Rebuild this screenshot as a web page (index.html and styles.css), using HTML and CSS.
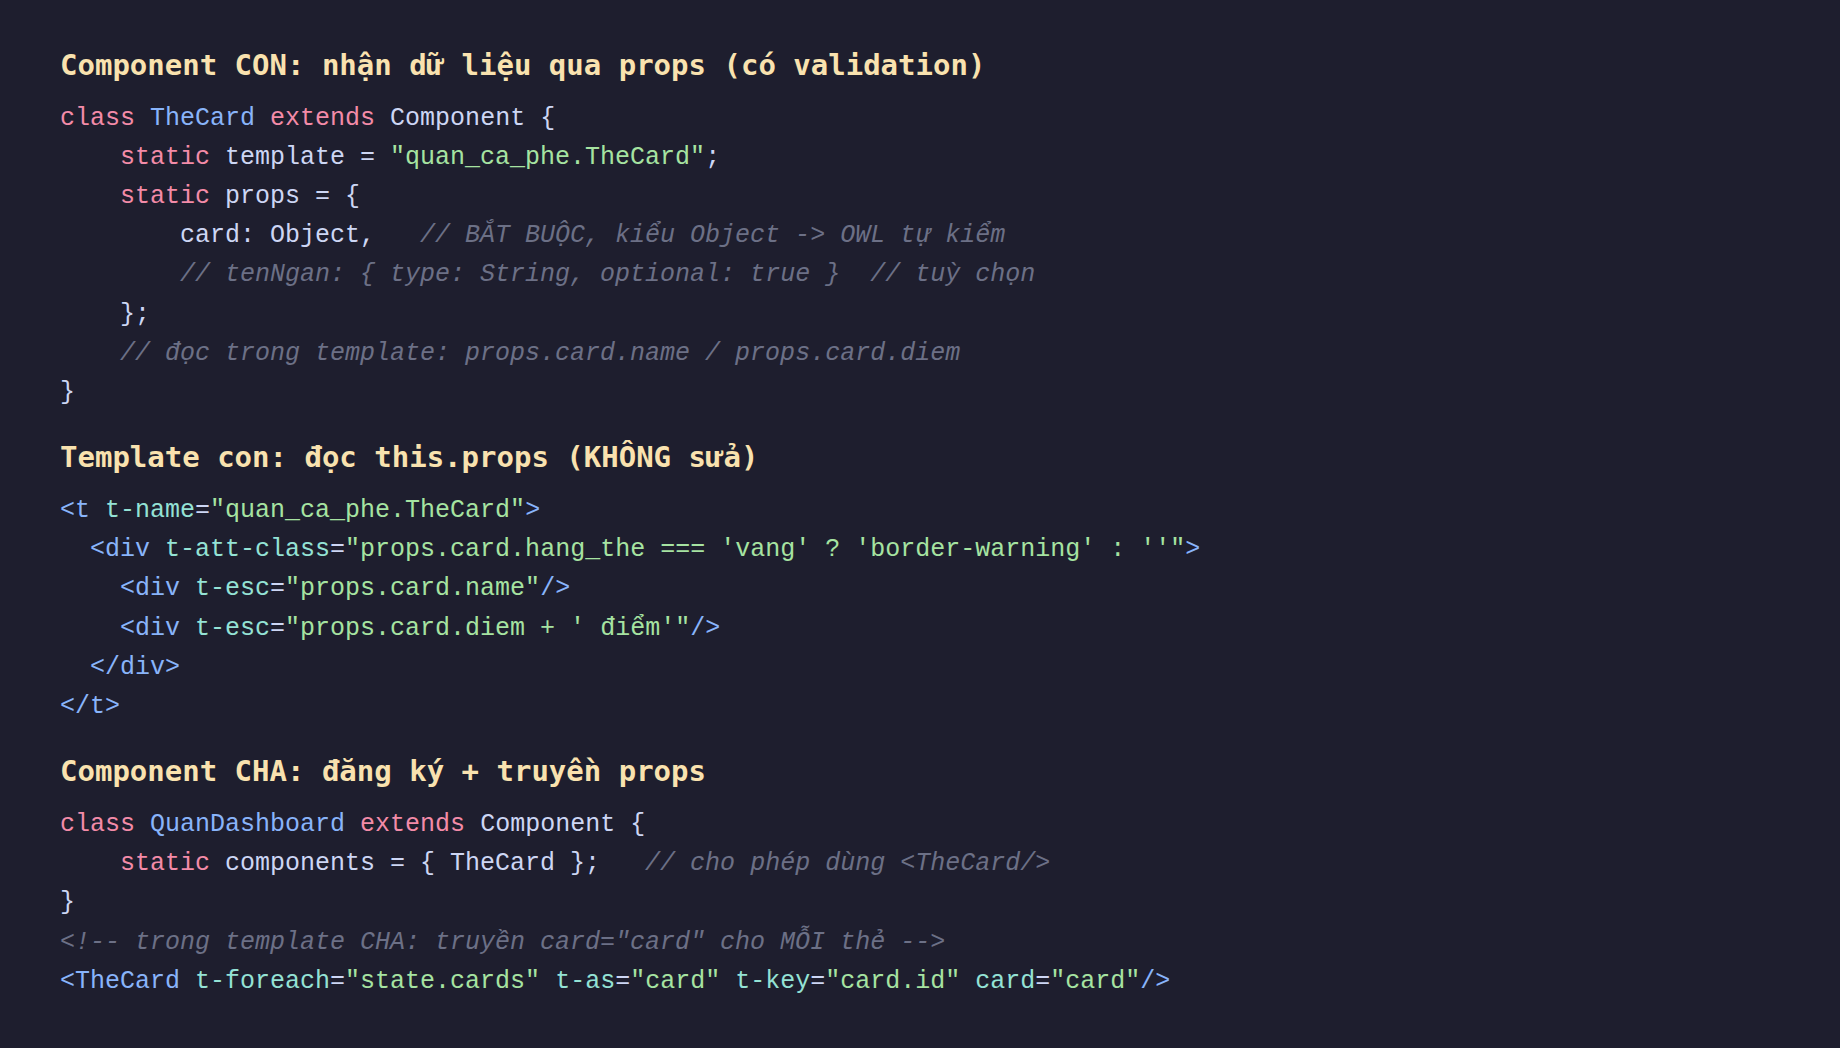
FILE: index.html
```html
<!DOCTYPE html>
<html lang="vi">
<head>
<meta charset="utf-8">
<title>OWL props</title>
<link rel="stylesheet" href="styles.css">
</head>
<body>
<main class="page">
<h2 class="heading">Component CON: nhận dữ liệu qua props (có validation)</h2>
<pre class="code"><span class="kw">class</span> <span class="cls">TheCard</span> <span class="kw">extends</span> Component {
    <span class="kw">static</span> template = <span class="str">"quan_ca_phe.TheCard"</span>;
    <span class="kw">static</span> props = {
        card: Object,   <span class="cm">// BẮT BUỘC, kiểu Object -&gt; OWL tự kiểm</span>
        <span class="cm">// tenNgan: { type: String, optional: true }  // tuỳ chọn</span>
    };
    <span class="cm">// đọc trong template: props.card.name / props.card.diem</span>
}</pre>
<h2 class="heading">Template con: đọc this.props (KHÔNG sửa)</h2>
<pre class="code"><span class="tag">&lt;t</span> <span class="attr">t-name</span>=<span class="str">"quan_ca_phe.TheCard"</span><span class="tag">&gt;</span>
  <span class="tag">&lt;div</span> <span class="attr">t-att-class</span>=<span class="str">"props.card.hang_the === 'vang' ? 'border-warning' : ''"</span><span class="tag">&gt;</span>
    <span class="tag">&lt;div</span> <span class="attr">t-esc</span>=<span class="str">"props.card.name"</span><span class="tag">/&gt;</span>
    <span class="tag">&lt;div</span> <span class="attr">t-esc</span>=<span class="str">"props.card.diem + ' điểm'"</span><span class="tag">/&gt;</span>
  <span class="tag">&lt;/div&gt;</span>
<span class="tag">&lt;/t&gt;</span></pre>
<h2 class="heading">Component CHA: đăng ký + truyền props</h2>
<pre class="code"><span class="kw">class</span> <span class="cls">QuanDashboard</span> <span class="kw">extends</span> Component {
    <span class="kw">static</span> components = { TheCard };   <span class="cm">// cho phép dùng &lt;TheCard/&gt;</span>
}
<span class="cm">&lt;!-- trong template CHA: truyền card="card" cho MỖI thẻ --&gt;</span>
<span class="tag">&lt;TheCard</span> <span class="attr">t-foreach</span>=<span class="str">"state.cards"</span> <span class="attr">t-as</span>=<span class="str">"card"</span> <span class="attr">t-key</span>=<span class="str">"card.id"</span> <span class="attr">card</span>=<span class="str">"card"</span><span class="tag">/&gt;</span></pre>
</main>
</body>
</html>
```
FILE: styles.css
```css
html, body {
  margin: 0;
  padding: 0;
  background: #1e1e2e;
}

.page {
  padding: 46.5px 60px 40px;
  min-height: 1048px;
  box-sizing: border-box;
  background: #1e1e2e;
}

.heading {
  margin: 0 0 14.7px;
  font-family: "DejaVu Sans Mono", monospace;
  font-weight: 700;
  font-size: 29px;
  line-height: 37.4px;
  color: #f9e2af;
}

.code {
  margin: 0 0 26.7px;
  font-family: "Liberation Mono", "DejaVu Sans Mono", monospace;
  font-size: 25px;
  line-height: 39.2px;
  color: #cdd6f4;
  white-space: pre;
}

.kw { color: #f38ba8; }
.cls { color: #89b4fa; }
.str { color: #a6e3a1; }
.cm { color: #6c7086; font-style: italic; }
.tag { color: #89b4fa; }
.attr { color: #94e2d5; }
```
